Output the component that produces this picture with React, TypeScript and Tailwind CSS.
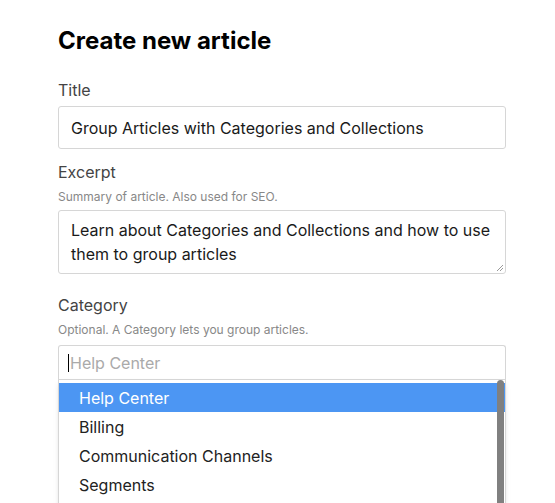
export default function App() {
  const items = ["Help Center", "Billing", "Communication Channels", "Segments"];
  return (
    <div className="h-[503px] overflow-hidden bg-white" style={{ fontFamily: "Inter, sans-serif" }}>
      <div className="ml-[58px] w-[448px] pt-[26px]">
        <h1 className="text-[24px] font-bold leading-[30px] text-black">Create new article</h1>
        <div className="mt-[23px] text-[16px] leading-[22px] text-[#444]">Title</div>
        <div className="mt-[5px] flex h-[43px] items-center rounded-[3px] border border-[#d6d6d6] px-[12px] text-[16px] text-[#1a1a1a]">
          Group Articles with Categories and Collections
        </div>
        <div className="mt-[12px] text-[16px] leading-[22px] text-[#444]">Excerpt</div>
        <div className="mt-[6px] text-[12px] leading-[16px] text-[#888]">Summary of article. Also used for SEO.</div>
        <div className="relative mt-[5px] h-[64px] rounded-[3px] border border-[#d6d6d6] px-[12px] pt-[7px] text-[16px] leading-[24px] text-[#1a1a1a]">
          Learn about Categories and Collections and how to use them to group articles
          <svg className="absolute bottom-[2px] right-[2px]" width="7" height="7" viewBox="0 0 7 7"><path d="M1 7L7 1M4 7L7 4" stroke="#999" strokeWidth="1" /></svg>
        </div>
        <div className="mt-[20px] text-[16px] leading-[22px] text-[#444]">Category</div>
        <div className="mt-[6px] text-[12px] leading-[16px] text-[#888]">Optional. A Category lets you group articles.</div>
        <div className="relative mt-[7px]">
          <div className="flex h-[34px] items-center rounded-t-[3px] border border-b-0 border-[#d6d6d6] px-[9px] text-[16px] text-[#aaa]">
            <span className="mr-[1px] h-[18px] w-[1px] bg-black" />Help Center
          </div>
          <div className="relative h-[200px] border border-[#d6d6d6] pt-[3px] shadow-md">
            {items.map((t, i) => (
              <div key={t} className={`flex h-[29px] items-center px-[20px] text-[16px] ${i === 0 ? "bg-[#4c96f3] text-white" : "text-[#222]"}`}>{t}</div>
            ))}
            <div className="absolute right-[1px] top-[0px] h-[200px] w-[7px] rounded-full bg-[#808080]" />
          </div>
        </div>
      </div>
    </div>
  );
}
